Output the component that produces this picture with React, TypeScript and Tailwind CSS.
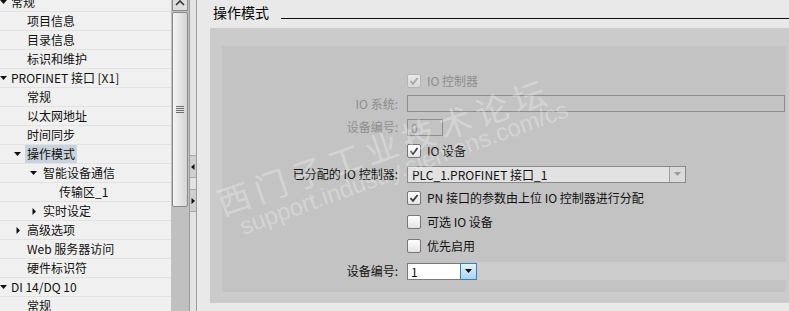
import React from 'react';

type Node = {
  label: React.ReactNode;
  level: 0 | 1 | 2 | 3;
  arrow?: 'down' | 'right';
  selected?: boolean;
};

const tree: Node[] = [
  { label: '常规', level: 0, arrow: 'down' },
  { label: '项目信息', level: 1 },
  { label: '目录信息', level: 1 },
  { label: '标识和维护', level: 1 },
  { label: 'PROFINET 接口 [X1]', level: 0, arrow: 'down' },
  { label: '常规', level: 1 },
  { label: '以太网地址', level: 1 },
  { label: '时间同步', level: 1 },
  { label: '操作模式', level: 1, arrow: 'down', selected: true },
  { label: '智能设备通信', level: 2, arrow: 'down' },
  { label: '传输区_1', level: 3 },
  { label: '实时设定', level: 2, arrow: 'right' },
  { label: '高级选项', level: 1, arrow: 'right' },
  { label: 'Web 服务器访问', level: 1 },
  { label: '硬件标识符', level: 1 },
  { label: 'DI 14/DQ 10', level: 0, arrow: 'down' },
  { label: '常规', level: 1 },
];

const indent = ['pl-0', 'pl-[14px]', 'pl-[30px]', 'pl-[46px]'];
const slot = ['w-[11px]', 'w-[13px]', 'w-[13px]', 'w-[13px]'];

const Arrow = ({ dir }: { dir?: 'down' | 'right' }) => {
  if (dir === 'down')
    return (
      <svg width="7" height="4" viewBox="0 0 7 4">
        <path d="M0 0H7L3.5 4Z" fill="#111" />
      </svg>
    );
  if (dir === 'right')
    return (
      <svg width="7" height="7" viewBox="0 0 7 7" className="ml-[1px]">
        <path d="M1.5 0L5 3.5L1.5 7Z" fill="#111" />
      </svg>
    );
  return null;
};

const Check = ({ checked, disabled }: { checked?: boolean; disabled?: boolean }) => (
  <div
    className={
      disabled
        ? 'w-[14px] h-[14px] rounded-[2px] border border-[#b4b4b4] bg-linear-to-b from-[#e9e9e9] to-[#d8d8d8] flex items-center justify-center'
        : 'w-[14px] h-[14px] rounded-[2px] border border-[#767676] bg-linear-to-b from-white to-[#e3e3e3] flex items-center justify-center'
    }
  >
    {checked && (
      <svg width="10" height="10" viewBox="0 0 10 10">
        <path
          d="M1.5 5.2L4 7.8L8.6 2"
          fill="none"
          stroke={disabled ? '#a6a6a6' : '#3c3c3c'}
          strokeWidth="1.8"
        />
      </svg>
    )}
  </div>
);

const Row = ({ label, muted, h, children }: { label?: string; muted?: boolean; h: string; children: React.ReactNode }) => (
  <div className={`flex items-center ${h}`}>
    <div className={muted ? 'w-[185px] pr-[9px] text-right text-[#8d8d8d]' : 'w-[185px] pr-[9px] text-right text-[#111]'}>
      {label}
    </div>
    <div className="flex-1 flex items-center">{children}</div>
  </div>
);

const CheckRow = ({ h, text, checked, disabled }: { h: string; text: string; checked?: boolean; disabled?: boolean }) => (
  <Row h={h}>
    <Check checked={checked} disabled={disabled} />
    <span className={disabled ? 'ml-[6px] text-[#8d8d8d]' : 'ml-[6px] text-[#111]'}>{text}</span>
  </Row>
);

export default function App() {
  return (
    <div className="relative w-[789px] h-[311px] overflow-hidden flex font-['Noto_Sans_CJK_SC',sans-serif] text-[12px] leading-[16px] select-none">
      {/* project tree */}
      <div className="w-[171px] h-full bg-[#f0f0f0] overflow-hidden">
        <div className="-mt-[7px]">
          {tree.map((n, i) => (
            <div key={i} className={`flex items-stretch h-[19px] border-b border-[#e2e2e2] ${indent[n.level]}`}>
              <div className={`${slot[n.level]} flex items-center`}>
                <Arrow dir={n.arrow} />
              </div>
              <span
                className={
                  n.selected
                    ? 'flex items-center -ml-[2px] px-[2px] bg-[#c8d3de] text-[#111] whitespace-nowrap'
                    : 'flex items-center text-[#111] whitespace-nowrap'
                }
              >
                {n.label}
              </span>
            </div>
          ))}
        </div>
      </div>

      {/* scrollbar */}
      <div className="w-[18px] h-full bg-[#c0c0c0] flex flex-col">
        <div className="h-[11px] mx-[1px] border border-t-0 border-[#8c8c8c] bg-[#dedede] flex justify-center">
          <svg width="10" height="6" viewBox="0 0 10 6">
            <path d="M1 5L5 1L9 5" fill="none" stroke="#333" strokeWidth="1.6" />
          </svg>
        </div>
        <div className="mt-[1px] mx-[1px] h-[195px] rounded-[2px] border border-[#8a8a8a] bg-linear-to-r from-[#f4f4f4] to-[#d4d4d4] flex flex-col items-center justify-center gap-[1px]">
          <div className="w-[8px] h-px bg-[#6e6e6e]" />
          <div className="w-[8px] h-px bg-[#6e6e6e]" />
          <div className="w-[8px] h-px bg-[#6e6e6e]" />
          <div className="w-[8px] h-px bg-[#6e6e6e]" />
        </div>
      </div>

      {/* splitter */}
      <div className="w-[8px] h-full border-l border-r border-[#9c9c9c] bg-[#e3e3e3] flex flex-col">
        <div className="h-[155px]" />
        <div className="h-[23px] bg-[#cfcfcf] border-t border-b border-[#a8a8a8] flex items-center">
          <svg width="4" height="6" viewBox="0 0 4 6" className="ml-[1px]">
            <path d="M3.5 0V6L0 3Z" fill="#111" />
          </svg>
        </div>
        <div className="h-[11px]" />
        <div className="h-[23px] bg-[#cfcfcf] border-t border-b border-[#a8a8a8] flex items-center">
          <svg width="4" height="6" viewBox="0 0 4 6" className="ml-[1px]">
            <path d="M0.5 0V6L4 3Z" fill="#111" />
          </svg>
        </div>
      </div>

      {/* properties panel */}
      <div className="flex-1 h-full bg-[#e9e9e9] flex flex-col">
        <div className="h-[28px] flex pl-[16px]">
          <span className="pt-[4px] text-[14px] leading-[16px] text-black whitespace-nowrap">操作模式</span>
          <div className="flex-1 h-px bg-[#111] mt-[18px] ml-[12px]" />
        </div>

        <div className="ml-[13px] pt-[18px] pl-[12px] pr-[3px] pb-[11px] bg-[#cbcbcb]">
          <div className="bg-[#c3c3c3] pt-[23px] pb-[7px]">
            <CheckRow h="h-[23px]" text="IO 控制器" checked disabled />
            <Row h="h-[23px]" label="IO 系统:" muted>
              <div className="flex-1 h-[17px] border border-[#8e8e8e] mr-px" />
            </Row>
            <Row h="h-[24px]" label="设备编号:" muted>
              <div className="w-[36px] h-[17px] border border-[#8e8e8e] pl-[3px] text-[#8d8d8d] leading-[15px]">0</div>
            </Row>
            <CheckRow h="h-[23px]" text="IO 设备" checked />
            <Row h="h-[24px]" label="已分配的 IO 控制器:">
              <div className="w-[279px] h-[17px] border border-[#8a8a8a] bg-[#e2e2e2] flex">
                <span className="flex-1 pl-[4px] leading-[15px] text-[#111] whitespace-nowrap">PLC_1.PROFINET 接口_1</span>
                <div className="w-[16px] border-l border-[#a0a0a0] bg-[#dadada] flex items-center justify-center">
                  <svg width="7" height="4" viewBox="0 0 7 4">
                    <path d="M0 0H7L3.5 4Z" fill="#9a9a9a" />
                  </svg>
                </div>
              </div>
            </Row>
            <CheckRow h="h-[24px]" text="PN 接口的参数由上位 IO 控制器进行分配" checked />
            <CheckRow h="h-[24px]" text="可选 IO 设备" />
            <CheckRow h="h-[23px]" text="优先启用" />
            <Row h="h-[28px]" label="设备编号:">
              <div className="w-[54px] h-[17px] border border-[#7b7b7b] bg-white pl-[3px] leading-[15px] text-[#111]">1</div>
              <div className="w-[17px] h-[17px] -ml-px border border-[#3c7fb1] bg-linear-to-b from-[#e6f3fc] to-[#a9d4f2] flex items-center justify-center">
                <svg width="7" height="4" viewBox="0 0 7 4">
                  <path d="M0 0H7L3.5 4Z" fill="#111" />
                </svg>
              </div>
              <div className="flex-1 h-[18px] bg-[#cdcdcd]" />
            </Row>
          </div>
        </div>
      </div>

      {/* watermark */}
      <div className="pointer-events-none absolute left-[384px] top-[146px] -translate-x-1/2 -translate-y-1/2 -rotate-[19deg] whitespace-nowrap text-[33px] leading-none tracking-[6px] text-white/30">
        西门子工业技术论坛
      </div>
      <div className="pointer-events-none absolute left-[404px] top-[168px] -translate-x-1/2 -translate-y-1/2 -rotate-[20deg] whitespace-nowrap font-['Liberation_Sans',sans-serif] text-[24px] leading-none text-white/30">
        support.industry.siemens.com/cs
      </div>
    </div>
  );
}
